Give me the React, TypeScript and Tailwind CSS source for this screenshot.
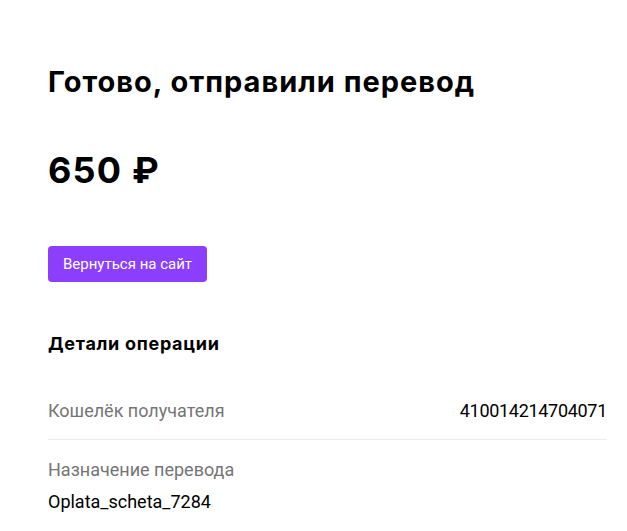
const details = [
  { label: "Кошелёк получателя", value: "410014214704071", inline: true },
  { label: "Назначение перевода", value: "Oplata_scheta_7284", inline: false },
];

export default function App() {
  return (
    <div className="min-h-screen bg-white pl-12 pr-5 pt-16 text-black">
      <h1 className="font-['Inter',sans-serif] text-[29px] font-bold leading-[36px] tracking-[1px]">
        Готово, отправили перевод
      </h1>

      <div className="mt-12 font-['Inter',sans-serif] text-[36px] font-bold leading-[44px] tracking-[1.2px]">
        650 ₽
      </div>

      <button className="mt-[54px] h-9 rounded-[4px] bg-[#8b3ffd] px-[15px] font-['Roboto',sans-serif] text-[15px] text-white">
        Вернуться на сайт
      </button>

      <h2 className="mt-[50px] font-['Inter',sans-serif] text-[18px] font-bold leading-6 tracking-[0.7px]">
        Детали операции
      </h2>

      <div className="mt-[43px] font-['Roboto',sans-serif] text-[18px] leading-6">
        {details.map((row) =>
          row.inline ? (
            <div
              key={row.label}
              className="flex items-center justify-between border-b border-[#ebebeb] pb-4"
            >
              <span className="text-[#757575]">{row.label}</span>
              <span className="tracking-[-0.3px]">{row.value}</span>
            </div>
          ) : (
            <div key={row.label} className="pt-[18px]">
              <div className="text-[#757575]">{row.label}</div>
              <div className="mt-2">{row.value}</div>
            </div>
          )
        )}
      </div>
    </div>
  );
}
